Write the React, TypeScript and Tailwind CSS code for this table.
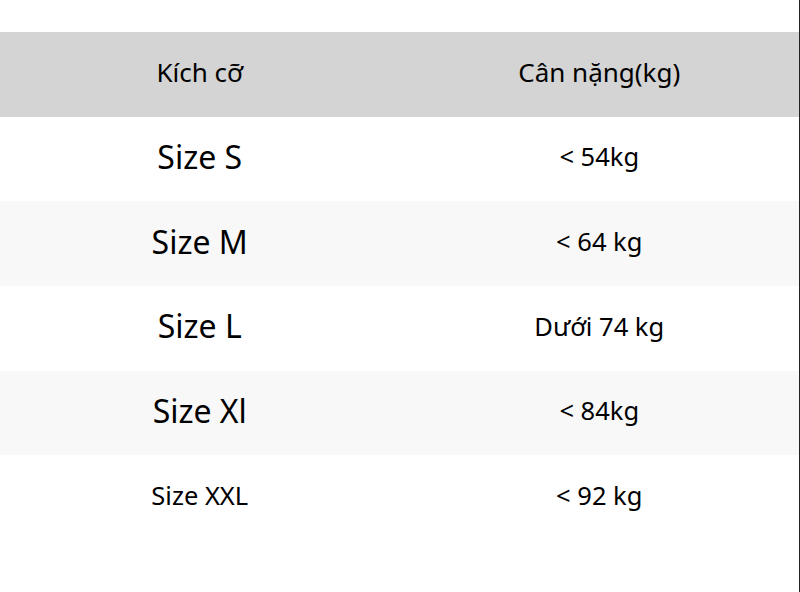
const rows = [
  { size: 'Size S', weight: '< 54kg', big: true },
  { size: 'Size M', weight: '< 64 kg', big: true },
  { size: 'Size L', weight: 'Dưới 74 kg', big: true },
  { size: 'Size Xl', weight: '< 84kg', big: true },
  { size: 'Size XXL', weight: '< 92 kg', big: false },
];

export default function App() {
  return (
    <div className="w-[800px] h-[592px] bg-white pt-8 text-black border-r border-[#222]" style={{ fontFamily: '"Noto Sans", "Open Sans", sans-serif' }}>
      <div className="grid grid-cols-2 h-[84.67px] items-center bg-[#d4d4d4] text-[26px] leading-none pb-1">
        <div className="text-center">Kích cỡ</div>
        <div className="text-center">Cân nặng(kg)</div>
      </div>
      {rows.map((r, i) => (
        <div
          key={r.size}
          className={`grid grid-cols-2 h-[84.67px] items-center leading-none pb-1 ${i % 2 === 1 ? 'bg-[#f8f8f8]' : 'bg-white'}`}
        >
          <div className={`text-center ${r.big ? 'text-[32px]' : 'text-[25.5px]'}`}>{r.size}</div>
          <div className="text-center text-[25.5px]">{r.weight}</div>
        </div>
      ))}
    </div>
  );
}
